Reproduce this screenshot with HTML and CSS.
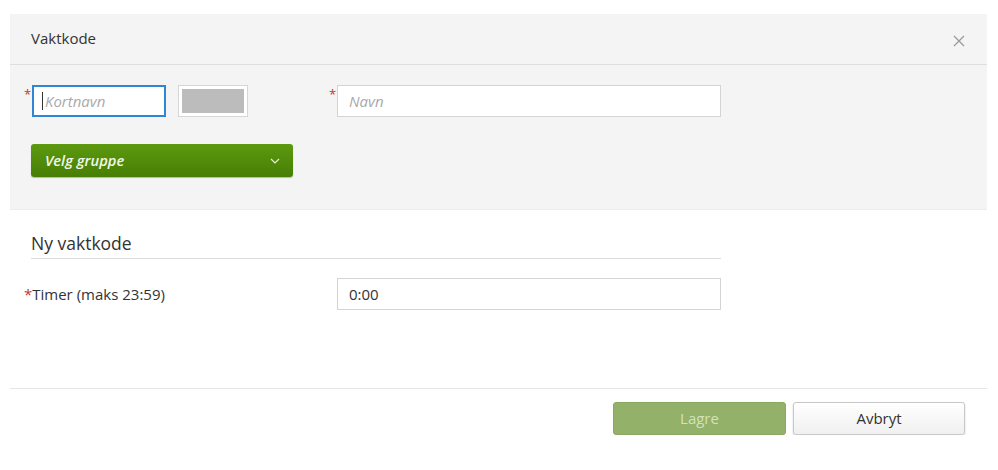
FILE: index.html
```html
<!DOCTYPE html>
<html>
<head>
<meta charset="utf-8">
<link rel="stylesheet" href="styles.css">
</head>
<body>
<div class="dialog">
  <div class="header">
    <span class="title">Vaktkode</span>
    <span class="close">
      <svg width="12" height="12" viewBox="0 0 12 12"><path d="M1 1L11 11M11 1L1 11" stroke="#999" stroke-width="1.3" fill="none"/></svg>
    </span>
  </div>
  <div class="top">
    <div class="row1">
      <div class="field">
        <span class="req">*</span>
        <div class="input short focused"><span class="caret"></span><span class="ph">Kortnavn</span></div>
      </div>
      <div class="swatch"><div class="swatch-inner"></div></div>
      <div class="field navn">
        <span class="req">*</span>
        <div class="input long"><span class="ph">Navn</span></div>
      </div>
    </div>
    <div class="group-btn">
      <span>Velg gruppe</span>
      <svg width="10" height="6" viewBox="0 0 10 6"><path d="M1 1L5 5L9 1" stroke="#e6f0d8" stroke-width="1.2" fill="none"/></svg>
    </div>
  </div>
  <div class="body">
    <div class="section-title">Ny vaktkode</div>
    <div class="row2">
      <label class="lbl"><span class="req2">*</span>Timer (maks 23:59)</label>
      <div class="input long val">0:00</div>
    </div>
  </div>
  <div class="footer">
    <button class="btn save">Lagre</button>
    <button class="btn cancel">Avbryt</button>
  </div>
</div>
</body>
</html>
```
FILE: styles.css
```css
* { box-sizing: border-box; }
body {
  margin: 0;
  background: #fff;
  font-family: "Open Sans", "Liberation Sans", sans-serif;
  color: #333;
}
.dialog {
  margin: 14px 11px 0 10px;
  width: 977px;
}
.header {
  height: 51px;
  background: #f4f4f4;
  border-bottom: 1px solid #dedede;
  display: flex;
  align-items: center;
  justify-content: space-between;
  padding: 0 22px 0 21px;
}
.title {
  font-size: 15px;
  color: #333;
  margin-top: -3px;
}
.close {
  display: flex;
  margin-top: 3px;
}
.top {
  background: #f4f4f4;
  height: 145px;
  padding: 20px 0 0 14px;
  border-bottom: 1px solid #ececec;
}
.row1 {
  display: flex;
  align-items: flex-start;
}
.field {
  display: flex;
  align-items: flex-start;
}
.req {
  color: #c0392b;
  font-size: 13px;
  width: 8px;
  line-height: 14px;
  margin-top: 2px;
}
.input {
  height: 32px;
  background: #fff;
  border: 1px solid #d4d4d4;
  display: flex;
  align-items: center;
  font-size: 15px;
}
.input.short {
  width: 134px;
  padding-left: 9px;
}
.input.focused {
  border: 2px solid #2f86d4;
  padding-left: 8px;
}
.caret {
  width: 1px;
  height: 18px;
  background: #333;
  margin-right: 2px;
}
.ph {
  font-style: italic;
  color: #aaa;
  font-size: 15px;
}
.input.long {
  width: 384px;
  padding-left: 11px;
}
.swatch {
  width: 70px;
  height: 32px;
  margin-left: 12px;
  border: 1px solid #d6d6d6;
  background: #fff;
  padding: 3px;
}
.swatch-inner {
  width: 100%;
  height: 100%;
  background: #bcbcbc;
}
.navn {
  margin-left: 81px;
}
.group-btn {
  margin: 27px 0 0 7px;
  width: 262px;
  height: 33px;
  border-radius: 3px;
  background: linear-gradient(#5d9a0f, #477e05);
  box-shadow: 0 1px 1px rgba(0,0,0,0.25);
  display: flex;
  align-items: center;
  justify-content: space-between;
  padding: 0 13px 0 14px;
  color: #f2f7ea;
  font-style: italic;
  font-weight: 600;
  font-size: 14.7px;
}
.group-btn span { margin-top: -2px; }
.body {
  height: 178px;
  padding: 21px 0 0 14px;
}
.section-title {
  margin-left: 7px;
  width: 690px;
  font-size: 17.5px;
  color: #333;
  padding-bottom: 3px;
  border-bottom: 1px solid #ddd;
  line-height: 24px;
}
.row2 {
  display: flex;
  align-items: center;
  margin-top: 19px;
}
.lbl {
  width: 313px;
  font-size: 15px;
  color: #333;
}
.req2 { color: #c0392b; }
.input.val {
  color: #333;
  font-size: 15px;
}
.footer {
  border-top: 1px solid #e6e6e6;
  display: flex;
  justify-content: flex-end;
  gap: 7px;
  padding: 13px 22px 0 0;
}
.btn {
  height: 33px;
  border-radius: 3px;
  font-family: "Open Sans", "Liberation Sans", sans-serif;
  font-size: 15px;
  padding-bottom: 3px;
}
.save {
  width: 173px;
  background: #93b168;
  border: 1px solid #8aa960;
  color: #d2e2bc;
}
.cancel {
  width: 172px;
  background: linear-gradient(#ffffff, #f0f0f0);
  border: 1px solid #c8c8c8;
  box-shadow: 0 1px 2px rgba(0,0,0,0.2);
  color: #333;
}
```
